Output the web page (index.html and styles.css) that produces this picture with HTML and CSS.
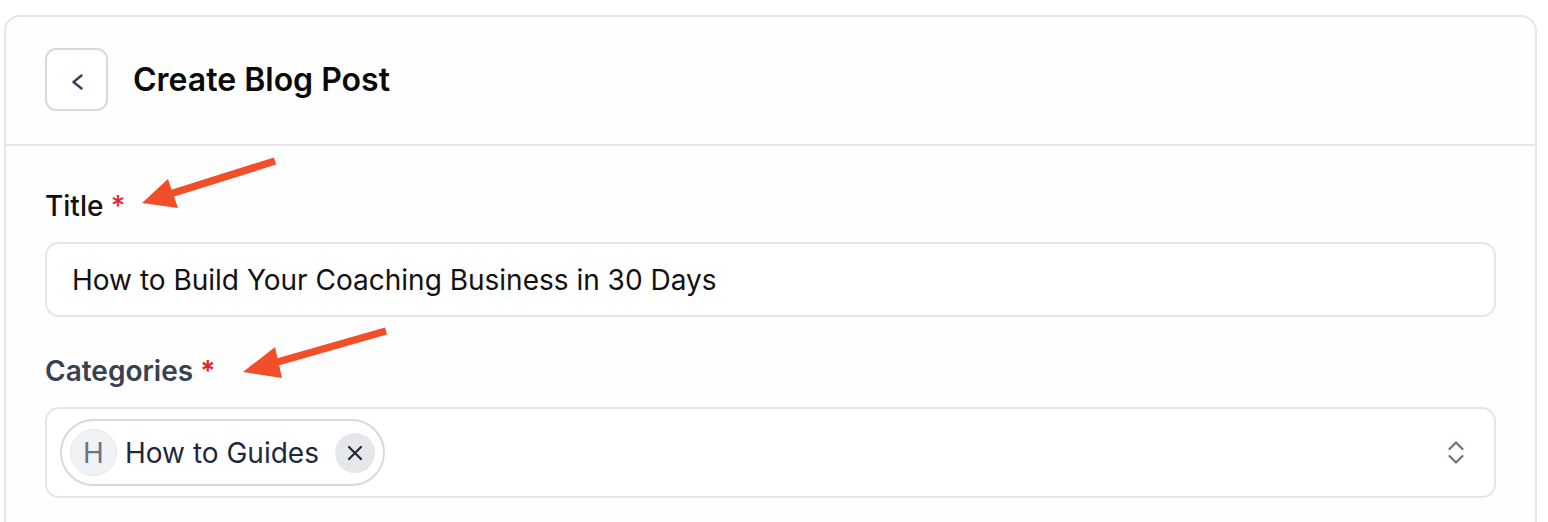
FILE: index.html
```html
<!DOCTYPE html>
<html lang="en">
<head>
<meta charset="utf-8">
<title>Create Blog Post</title>
<link rel="stylesheet" href="styles.css">
</head>
<body>
<div class="card">
  <header class="card-header">
    <button class="back-btn" aria-label="Back">
      <svg width="20" height="20" viewBox="0 0 20 20"><polyline points="14.5,5.5 6.5,12 14.5,18.5" fill="none" stroke="#334155" stroke-width="2.4" stroke-linecap="round" stroke-linejoin="round"/></svg>
    </button>
    <h1 class="page-title">Create Blog Post</h1>
  </header>
  <div class="card-body">
    <div class="field">
      <label class="label label-dark">Title <span class="req">*</span></label>
      <div class="input">How to Build Your Coaching Business in 30 Days</div>
    </div>
    <div class="field field-next">
      <label class="label label-slate">Categories <span class="req">*</span></label>
      <div class="select">
        <div class="chip">
          <span class="avatar">H</span>
          <span class="chip-text">How to Guides</span>
          <span class="chip-remove">
            <svg width="18" height="18" viewBox="0 0 18 18"><path d="M3 3 L15 15 M15 3 L3 15" stroke="#1f2937" stroke-width="2.2" stroke-linecap="round"/></svg>
          </span>
        </div>
        <svg class="updown" width="16" height="24" viewBox="0 0 16 24"><polyline points="1.5,8 8,1.5 14.5,8" fill="none" stroke="#6b7280" stroke-width="2.2" stroke-linecap="round" stroke-linejoin="round"/><polyline points="1.5,15 8,21.5 14.5,15" fill="none" stroke="#6b7280" stroke-width="2.2" stroke-linecap="round" stroke-linejoin="round"/></svg>
      </div>
    </div>
  </div>
</div>
<svg class="annotations" width="1548" height="522" viewBox="0 0 1548 522">
  <line x1="275" y1="161" x2="170" y2="194" stroke="#f24e29" stroke-width="7.5"/>
  <polygon points="142,203 168,179 178,208" fill="#f24e29"/>
  <line x1="386" y1="331" x2="274" y2="363" stroke="#f24e29" stroke-width="7.5"/>
  <polygon points="243,372 275,347 282,378" fill="#f24e29"/>
</svg>
</body>
</html>
```

FILE: styles.css
```css
html, body {
  margin: 0;
  padding: 0;
  background: #ffffff;
  overflow: hidden;
}

body {
  position: relative;
  width: 1548px;
  height: 522px;
  font-family: Inter, "Noto Sans", sans-serif;
  color: #0a0a0a;
}

.card {
  margin: 15px 11px 0 4px;
  border: 2px solid #e6e6ea;
  border-radius: 16px;
  background: #fefefe;
  min-height: 600px;
  box-sizing: border-box;
}

.card-header {
  display: flex;
  align-items: center;
  gap: 25px;
  padding: 31px 39px 33px;
  border-bottom: 2px solid #e6e6ea;
}

.back-btn {
  width: 63px;
  height: 63px;
  box-sizing: border-box;
  border: 2px solid #d6dae0;
  border-radius: 11px;
  background: #ffffff;
  display: flex;
  align-items: center;
  justify-content: center;
  padding: 0;
}

.page-title {
  margin: 0;
  font-size: 32px;
  line-height: 38px;
  font-weight: 600;
  color: #0a0a0a;
}

.card-body {
  padding: 44px 39px 0;
}

.field-next {
  margin-top: 38px;
}

.label {
  display: block;
  font-size: 28px;
  line-height: 32px;
  margin-bottom: 20px;
}

.label-dark {
  font-weight: 500;
  color: #111111;
}

.label-slate {
  font-weight: 600;
  color: #374151;
}

.req {
  color: #e0262b;
}

.input {
  height: 75px;
  box-sizing: border-box;
  border: 2px solid #e6e6ea;
  border-radius: 14px;
  background: #ffffff;
  padding: 0 25px;
  display: flex;
  align-items: center;
  font-size: 28px;
  color: #111111;
}

.select {
  height: 91px;
  box-sizing: border-box;
  border: 2px solid #e6e6ea;
  border-radius: 14px;
  background: #ffffff;
  padding: 0 30px 0 13px;
  display: flex;
  align-items: center;
  justify-content: space-between;
}

.chip {
  height: 67px;
  box-sizing: border-box;
  border: 2px solid #d6dae0;
  border-radius: 999px;
  background: #ffffff;
  display: flex;
  align-items: center;
  padding: 0 8px;
}

.avatar {
  width: 47px;
  height: 47px;
  box-sizing: border-box;
  border-radius: 50%;
  background: #f1f2f5;
  border: 1.5px solid #e5e7eb;
  display: flex;
  align-items: center;
  justify-content: center;
  font-size: 28px;
  color: #6b7280;
}

.chip-text {
  margin-left: 8px;
  font-size: 28px;
  color: #1e293b;
}

.chip-remove {
  width: 40px;
  height: 40px;
  margin-left: 16px;
  border-radius: 50%;
  background: #e5e7eb;
  display: flex;
  align-items: center;
  justify-content: center;
}

.updown {
  display: block;
}

.annotations {
  position: absolute;
  left: 0;
  top: 0;
  pointer-events: none;
}
```
